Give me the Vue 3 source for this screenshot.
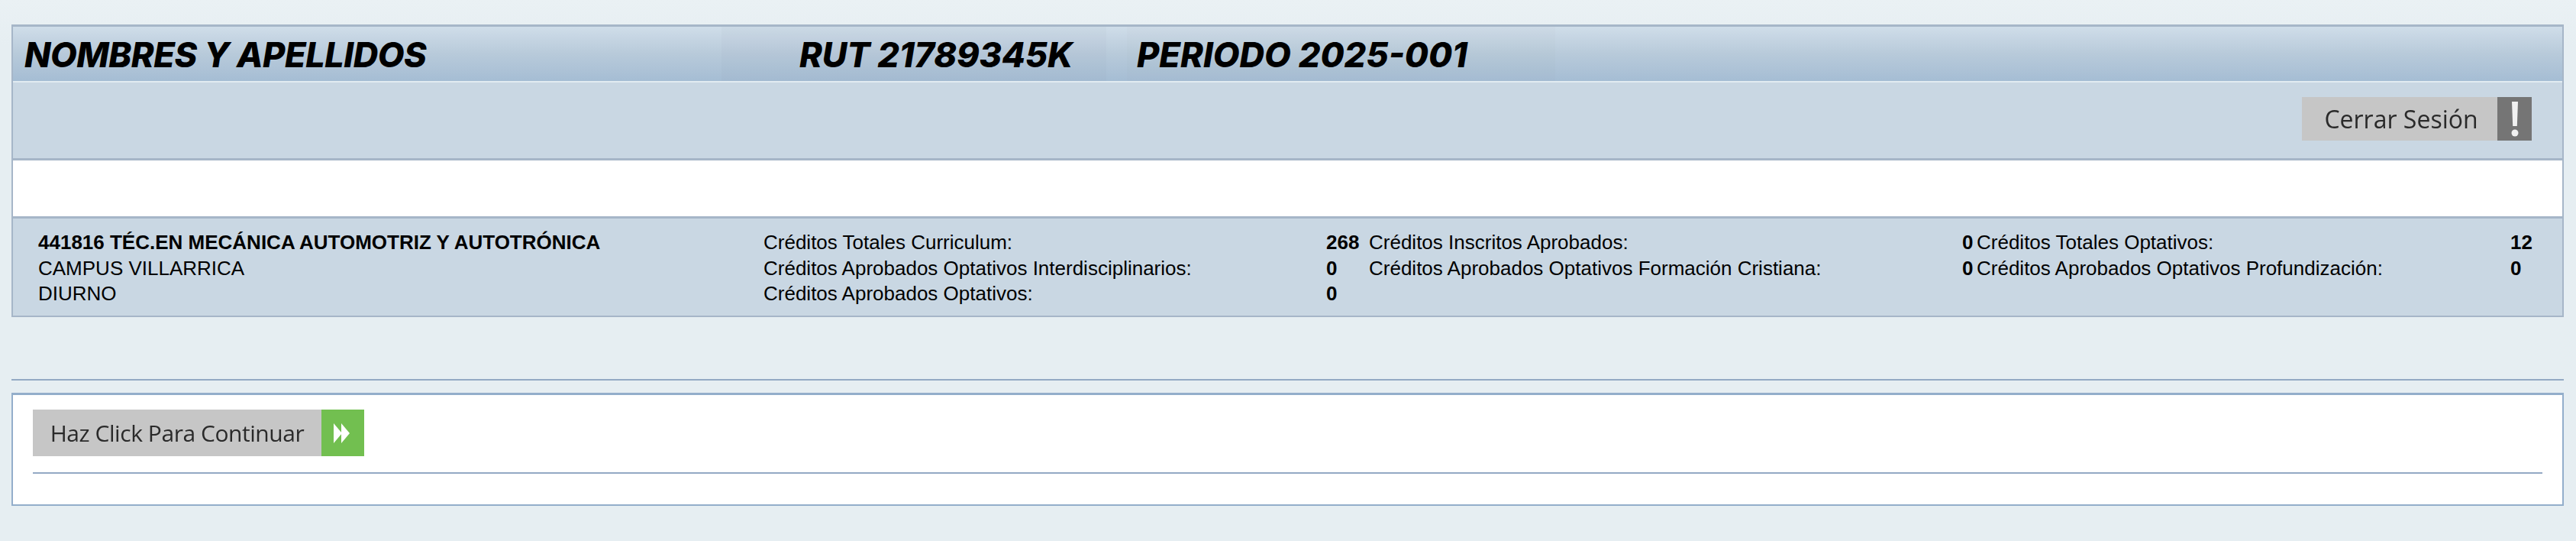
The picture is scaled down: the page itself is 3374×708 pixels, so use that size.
<template>
  <div class="page">
    <section class="panel">
      <header class="head">
        <h1 class="head__name">NOMBRES Y APELLIDOS</h1>
        <span class="head__rut">RUT 21789345K</span>
        <span class="head__period">PERIODO 2025-001</span>
      </header>

      <div class="actions">
        <a class="btn btn--logout">
          <span class="btn__label">Cerrar Sesión</span>
          <span class="btn__icon btn__icon--grey">
            <svg width="10" height="46" viewBox="0 0 10 46">
              <path d="M1 0h8L7.8 32H2.2z" fill="#f1f1f1" />
              <circle cx="5" cy="41" r="4.5" fill="#f1f1f1" />
            </svg>
          </span>
        </a>
      </div>

      <div class="blank"></div>

      <table class="credits">
        <colgroup>
          <col v-for="w in colWidths" :key="w.id" :style="{ width: w.px + 'px' }" />
        </colgroup>
        <tbody>
          <tr v-for="(row, i) in rows" :key="i">
            <td :class="{ strong: i === 0 }">{{ career[i] }}</td>
            <template v-for="cell in row" :key="cell.label">
              <td>{{ cell.label }}</td>
              <td class="strong">{{ cell.value }}</td>
            </template>
          </tr>
        </tbody>
      </table>
    </section>

    <hr class="rule" />

    <section class="box">
      <a class="btn btn--next">
        <span class="btn__label">Haz Click Para Continuar</span>
        <span class="btn__icon btn__icon--green">
          <svg width="21" height="28" viewBox="0 0 21 28">
            <path d="M0 1l11 13L0 27z" fill="#fff" />
            <path d="M10 1l11 13-11 13z" fill="#fff" />
          </svg>
        </span>
      </a>
      <hr class="box__rule" />
    </section>
  </div>
</template>

<script setup>
const career = ['441816 TÉC.EN MECÁNICA AUTOMOTRIZ Y AUTOTRÓNICA', 'CAMPUS VILLARRICA', 'DIURNO']

const colWidths = [
  { id: 'career', px: 950 },
  { id: 'l1', px: 737 },
  { id: 'v1', px: 56 },
  { id: 'l2', px: 777 },
  { id: 'v2', px: 19 },
  { id: 'l3', px: 699 },
  { id: 'v3', px: 69 },
]

const rows = [
  [
    { label: 'Créditos Totales Curriculum:', value: '268' },
    { label: 'Créditos Inscritos Aprobados:', value: '0' },
    { label: 'Créditos Totales Optativos:', value: '12' },
  ],
  [
    { label: 'Créditos Aprobados Optativos Interdisciplinarios:', value: '0' },
    { label: 'Créditos Aprobados Optativos Formación Cristiana:', value: '0' },
    { label: 'Créditos Aprobados Optativos Profundización:', value: '0' },
  ],
  [{ label: 'Créditos Aprobados Optativos:', value: '0' }],
]
</script>

<style>
body {
  margin: 0;
  background: #e6eef2;
}
</style>

<style scoped>
.page {
  width: 3374px;
  height: 708px;
  box-sizing: border-box;
  padding: 32px 16px 0 15px;
  background: linear-gradient(180deg, #eaf1f4 0, #e6eef2 60px);
  overflow: hidden;
  font-family: 'Liberation Sans', Arial, sans-serif;
  color: #000;
}

.panel {
  box-sizing: border-box;
  height: 383px;
  border: 2px solid #a6b6c8;
  border-top-width: 3px;
  background: #c9d7e3;
}

.head {
  display: flex;
  box-sizing: border-box;
  height: 73px;
  border-bottom: 2px solid #e2ebf1;
  background: linear-gradient(180deg, #cfdde9 0, #b8cada 50%, #a5bdd4 100%);
  font-family: Inter, 'Liberation Sans', sans-serif;
  font-size: 45px;
  font-style: italic;
  font-weight: 800;
  line-height: 74px;
}

.head__name {
  width: 913px;
  margin: 0;
  padding-left: 15px;
  font: inherit;
  letter-spacing: -0.45px;
}

/* the faint tonal blocks behind the RUT and the period */
.head__rut {
  width: 402px;
  padding-left: 102px;
  background: rgba(110, 125, 140, 0.035);
  letter-spacing: -0.15px;
}

.head__period {
  width: 548px;
  margin-left: 27px;
  padding-left: 13px;
  background: rgba(110, 125, 140, 0.025);
}

.actions {
  display: flex;
  justify-content: flex-end;
  align-items: center;
  box-sizing: border-box;
  height: 102px;
  padding: 0 40px 4px 0;
  border-bottom: 3px solid #a6b6c8;
}

.btn {
  display: flex;
  background: #c6c6c6;
  color: #2a2a2a;
  font-family: 'Open Sans', sans-serif;
}

.btn__label {
  flex: 1;
  display: flex;
  align-items: center;
  justify-content: center;
  filter: blur(0.5px);
}

.btn__icon {
  display: flex;
  align-items: center;
  justify-content: center;
}

.btn__icon svg {
  filter: blur(0.5px);
}

.btn__icon--grey {
  width: 45px;
  background: #757575;
}

.btn__icon--green {
  width: 56px;
  padding-right: 3px;
  box-sizing: border-box;
  background: #72bf50;
}

.btn--logout {
  width: 301px;
  height: 57px;
  font-size: 32px;
}

.btn--logout .btn__label {
  padding-left: 4px;
}

.btn--next {
  width: 434px;
  height: 61px;
  font-size: 30px;
  letter-spacing: -0.45px;
}

.blank {
  height: 73px;
  border-bottom: 3px solid #a6b6c8;
  background: #fff;
}

.credits {
  border-collapse: collapse;
  table-layout: fixed;
  margin: 15px 0 0 33px;
  width: 3307px;
  font-size: 26px;
}

.credits td {
  height: 33.5px;
  padding: 0;
  white-space: nowrap;
}

.strong {
  font-weight: 700;
}

.rule {
  height: 2px;
  margin: 81px 0 0;
  border: 0;
  background: #93a9c4;
}

.box {
  box-sizing: border-box;
  height: 148px;
  margin-top: 16px;
  padding: 19px 26px 0;
  border: 2px solid #93aecb;
  border-top-width: 3px;
  background: #fff;
}

.box__rule {
  height: 2px;
  margin: 21px 0 0;
  border: 0;
  background: #93a9c4;
}
</style>
